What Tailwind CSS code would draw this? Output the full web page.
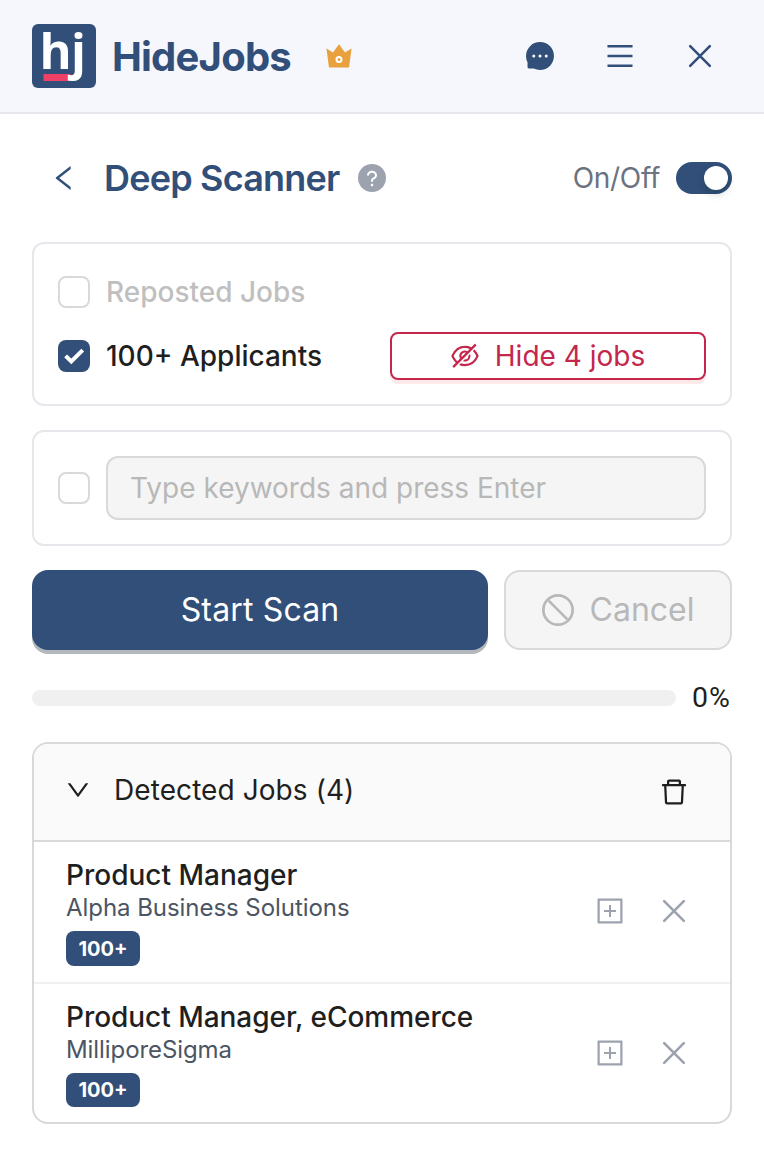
<!DOCTYPE html>
<html lang="en">
<head>
<meta charset="utf-8">
<title>HideJobs</title>
<script src="https://cdn.jsdelivr.net/npm/@tailwindcss/browser@4"></script>
</head>
<body class="w-[764px] h-[1156px] overflow-hidden bg-white font-['Inter',sans-serif] [font-optical-sizing:none] antialiased text-[28px] leading-[44px] text-[#1f1f1f]">
<svg class="hidden">
  <symbol id="close" viewBox="64 64 896 896"><path d="M197 197L827 827M827 197L197 827" fill="none" stroke="currentColor" stroke-width="82" stroke-linecap="round"/></symbol>
  <symbol id="plus-square" viewBox="64 64 896 896"><path d="M328 544h152v152c0 4.400 3.600 8 8 8h48c4.400 0 8-3.600 8-8V544h152c4.400 0 8-3.600 8-8v-48c0-4.400-3.600-8-8-8H544V328c0-4.400-3.600-8-8-8h-48c-4.400 0-8 3.600-8 8v152H328c-4.400 0-8 3.600-8 8v48c0 4.400 3.600 8 8 8z"/><path d="M880 112H144c-17.700 0-32 14.300-32 32v736c0 17.700 14.300 32 32 32h736c17.700 0 32-14.300 32-32V144c0-17.700-14.300-32-32-32zm-40 728H184V184h656v656z"/></symbol>
</svg>

<header class="flex h-[114px] items-center border-b-2 border-[#e5e7eb] bg-[#f5f7fc] px-8 text-[#314f79]">
  <svg class="size-16 shrink-0 overflow-visible" viewBox="0 0 64 64">
    <rect width="64" height="64" rx="6" fill="#314f79"/>
    <rect x="11.500" y="50" width="27" height="7" fill="#ef4168"/>
    <text x="7.500" y="44.500" font-family="Open Sans" font-weight="700" font-size="49" fill="#fff">h</text>
    <text x="39" y="45" font-family="Open Sans" font-weight="700" font-size="49" fill="#fff">j</text>
  </svg>
  <h1 class="ml-4 mt-0.5 w-[179px] whitespace-nowrap text-[40px] font-bold leading-[56px] tracking-[-0.8px]">HideJobs</h1>
  <svg class="ml-[34px] size-7 text-[#e8a13c]" viewBox="64 64 896 896" fill="currentColor"><path d="M899.600 276.500L705 396.400 518.400 147.500a8.060 8.060 0 00-12.900 0L319 396.400 124.300 276.500c-5.700-3.500-13.100 1.200-12.200 7.900L188.500 865c1.100 7.900 7.900 14 16 14h615.100c8 0 14.900-6 15.900-14l76.400-580.600c.8-6.700-6.500-11.400-12.300-7.900z"/><circle cx="512" cy="621.600" r="80.500" fill="none" stroke="#fff" stroke-width="64"/></svg>
  <div class="ml-auto mr-[18px] flex items-center gap-[52px]">
    <svg class="size-7" viewBox="64 64 896 896" fill="currentColor"><path d="M924.300 338.400a447.570 447.570 0 00-96.100-143.300 443.090 443.090 0 00-143-96.300A443.910 443.910 0 00512 64h-2c-60.500.3-119 12.300-174.100 35.900a444.080 444.080 0 00-141.700 96.500 445 445 0 00-95 142.800A449.890 449.890 0 0065 514.100c.3 69.400 16.900 138.300 47.900 199.900v152c0 25.400 20.600 46 45.900 46h151.800a447.720 447.720 0 00199.500 48h2.100c59.800 0 117.700-11.600 172.300-34.300A443.200 443.200 0 00827 830.500c41.200-40.900 73.600-88.700 96.300-142 23.500-55.200 35.500-113.900 35.800-174.500.2-60.900-11.600-120-34.800-175.600z"/><g fill="#fff"><circle cx="312" cy="512" r="48"/><circle cx="512" cy="512" r="48"/><circle cx="712" cy="512" r="48"/></g></svg>
    <svg class="size-7" viewBox="64 64 896 896" fill="currentColor"><rect x="112" y="160" width="800" height="80" rx="8"/><rect x="112" y="472" width="800" height="80" rx="8"/><rect x="112" y="784" width="800" height="80" rx="8"/></svg>
    <svg class="size-7"><use href="#close"/></svg>
  </div>
</header>

<main class="flex flex-col px-8 pt-8">
  <div class="flex h-16 items-center">
    <svg class="ml-[18px] size-7 text-[#314f79]" viewBox="64 64 896 896" fill="currentColor"><path d="M724 218.300V141c0-6.700-7.700-10.400-12.900-6.300L260.300 486.800a31.860 31.860 0 000 50.300l450.800 352.100c5.300 4.100 12.900.4 12.900-6.300v-77.300c0-4.900-2.300-9.600-6.100-12.600l-360-281 360-281.100c3.800-3 6.100-7.700 6.100-12.600z"/></svg>
    <h2 class="ml-[26px] w-[236px] whitespace-nowrap text-[36px] font-semibold tracking-[-0.8px] text-[#314f79]">Deep Scanner</h2>
    <svg class="ml-[18px] size-7 text-[#9ca3af]" viewBox="64 64 896 896"><circle cx="512" cy="512" r="448" fill="currentColor"/><path fill="#fff" d="M512 772c-22.100 0-40-17.900-40-40s17.900-40 40-40 40 17.900 40 40-17.900 40-40 40zm62.900-219.500a48.300 48.300 0 00-30.900 44.800V620c0 4.400-3.600 8-8 8h-48c-4.400 0-8-3.600-8-8v-21.500c0-23.100 6.700-45.900 19.900-64.900 12.900-18.600 30.900-32.800 52.100-40.900 34-13.100 56-41.600 56-72.700 0-44.100-43.100-80-96-80s-96 35.900-96 80v7.600c0 4.400-3.600 8-8 8h-48c-4.400 0-8-3.600-8-8V420c0-39.300 17.200-76 48.400-103.300C430.400 290.400 470 276 512 276s81.600 14.500 111.600 40.700C654.800 344 672 380.700 672 420c0 57.800-38.100 109.800-97.100 132.500z"/></svg>
    <span class="ml-auto tracking-[-0.3px] text-[#6b7280]">On/Off</span>
    <span class="ml-4 flex h-8 w-14 items-center justify-end rounded-full bg-[#314f79] pr-1"><span class="size-6 rounded-full bg-white shadow-[0_4px_8px_rgba(0,35,11,0.2)]"></span></span>
  </div>

  <section class="mt-8 flex flex-col gap-4 rounded-xl border-2 border-[#e5e7eb] p-6 font-medium">
    <div class="flex h-12 items-center gap-4 text-[#bfbfbf]">
      <span class="size-8 rounded-lg border-2 border-[#d9d9d9]"></span>
      <span>Reposted Jobs</span>
    </div>
    <div class="flex h-12 items-center gap-4">
      <svg class="size-8 rounded-lg bg-[#314f79]" viewBox="0 0 32 32"><path d="M7.600 15.800L13.300 21.500L24.700 10.100" fill="none" stroke="#fff" stroke-width="4"/></svg>
      <span>100+ Applicants</span>
      <button class="ml-auto flex h-12 w-[316px] items-center justify-center gap-4 rounded-lg border-2 border-[#c4264c] bg-white font-normal text-[#c4264c] shadow-[0_4px_0_#fde8ea]">
        <svg class="size-7" viewBox="64 64 896 896" fill="currentColor"><path d="M942.200 486.200Q889.470 375.110 816.700 305l-50.880 50.880C807.310 395.530 843.450 447.400 874.700 512 791.500 684.200 673.400 766 512 766q-72.670 0-133.870-22.380L323 798.750Q408 838 512 838q288.300 0 430.200-300.300a60.290 60.290 0 000-51.500zm-63.570-320.640L836 122.880a8 8 0 00-11.320 0L715.310 232.200Q624.860 186 512 186q-288.300 0-430.200 300.300a60.300 60.300 0 000 51.500q56.690 119.400 136.500 191.410L112.480 835a8 8 0 000 11.310L155.170 889a8 8 0 0011.310 0l712.150-712.120a8 8 0 000-11.320zM149.300 512C232.600 339.800 350.700 258 512 258c54.540 0 104.130 9.360 149.120 28.390l-70.300 70.300a176 176 0 00-238.130 238.130l-83.420 83.420C223.100 637.490 183.300 582.280 149.300 512zm246.700 0a112.110 112.110 0 01146.200-106.690L401.310 546.200A112 112 0 01396 512z"/><path d="M508 624c-3.460 0-6.870-.16-10.250-.47l-52.820 52.820a176.090 176.090 0 00227.420-227.420l-52.820 52.820c.31 3.380.47 6.790.47 10.250a111.940 111.940 0 01-112 112z"/></svg>
        <span>Hide 4 jobs</span>
      </button>
    </div>
  </section>

  <section class="mt-6 flex items-center gap-4 rounded-xl border-2 border-[#e5e7eb] p-6">
    <span class="size-8 rounded-lg border-2 border-[#d9d9d9]"></span>
    <div class="flex h-16 flex-1 items-center rounded-xl border-2 border-[#d9d9d9] bg-[#f5f5f5] px-[22px] text-[#b8b8b8]">Type keywords and press Enter</div>
  </section>

  <div class="mt-6 flex gap-4 text-[32px]">
    <button class="h-20 w-[456px] rounded-2xl bg-[#314f79] tracking-[0.15px] text-white shadow-[0_4px_0_#b2b8bc]">Start Scan</button>
    <button class="flex h-20 flex-1 items-center justify-center gap-4 rounded-2xl border-2 border-[#d9d9d9] bg-[#f5f5f5] text-[#b8b8b8]">
      <svg class="size-8" viewBox="64 64 896 896" fill="none" stroke="currentColor" stroke-width="76"><circle cx="512" cy="512" r="410"/><path d="M250 250L774 774"/></svg>
      <span>Cancel</span>
    </button>
  </div>

  <div class="mt-[26px] flex h-11 items-center">
    <div class="h-4 w-[644px] shrink-0 rounded-full bg-[#f0f0f0]"></div>
    <span class="ml-4 font-['Roboto',sans-serif] text-[28.500px] tracking-[1px]">0%</span>
  </div>

  <section class="mt-[22px] h-[382px] overflow-hidden rounded-2xl border-2 border-[#d9d9d9]">
    <div class="flex h-[98px] items-center border-b-2 border-[#d9d9d9] bg-[#fafafa] pl-8 pr-[42px] pb-1">
      <svg class="size-6" viewBox="64 64 896 896" fill="currentColor"><path d="M884 256h-75c-5.100 0-9.900 2.500-12.900 6.600L512 654.200 227.900 262.600c-3-4.100-7.800-6.600-12.900-6.600h-75c-6.500 0-10.300 7.400-6.500 12.700l352.600 486.100c12.800 17.600 39 17.600 51.700 0l352.600-486.100c3.900-5.300.1-12.700-6.400-12.700z"/></svg>
      <span class="ml-6 tracking-[0.08px]">Detected Jobs (4)</span>
      <svg class="ml-auto mt-1 size-7" viewBox="64 64 896 896" fill="currentColor"><path d="M360 184h304v72h72v-80c0-35.300-28.700-64-64-64H352c-35.300 0-64 28.700-64 64v80h72v-72zm504 72H160c-17.700 0-32 14.300-32 32v32c0 4.400 3.600 8 8 8h60.400l24.700 523c1.600 34.100 29.800 61 63.900 61h454c34.200 0 62.300-26.800 63.900-61l24.700-523H888c4.400 0 8-3.600 8-8v-32c0-17.700-14.300-32-32-32zM731.300 840H292.700l-24.200-512h487l-24.200 512z"/></svg>
    </div>
    <div class="flex h-[142px] items-start border-b-2 border-[#f0f0f0] pl-8 pr-[42px] pt-4">
      <div class="flex flex-col items-start">
        <div class="h-[34px] font-medium leading-[34px]">Product Manager</div>
        <div class="h-8 text-2xl leading-8 tracking-[-0.05px] text-[#4b5563]">Alpha Business Solutions</div>
        <div class="mt-[7px] flex h-[35px] w-[74px] items-center justify-center rounded-lg bg-[#314f79] text-[20px] font-bold text-white">100+</div>
      </div>
      <div class="ml-auto mt-[39px] flex gap-9 text-[#9ca3af]">
        <svg class="size-7" fill="currentColor"><use href="#plus-square"/></svg>
        <svg class="size-7"><use href="#close"/></svg>
      </div>
    </div>
    <div class="flex h-[138px] items-start pl-8 pr-[42px] pt-4">
      <div class="flex flex-col items-start">
        <div class="h-[34px] font-medium leading-[34px] tracking-[-0.04px]">Product Manager, eCommerce</div>
        <div class="h-8 text-2xl leading-8 tracking-[-0.08px] text-[#4b5563]">MilliporeSigma</div>
        <div class="mt-[7px] flex h-[34px] w-[74px] items-center justify-center rounded-lg bg-[#314f79] text-[20px] font-bold text-white">100+</div>
      </div>
      <div class="ml-auto mt-[39px] flex gap-9 text-[#9ca3af]">
        <svg class="size-7" fill="currentColor"><use href="#plus-square"/></svg>
        <svg class="size-7"><use href="#close"/></svg>
      </div>
    </div>
  </section>
</main>
</body>
</html>
